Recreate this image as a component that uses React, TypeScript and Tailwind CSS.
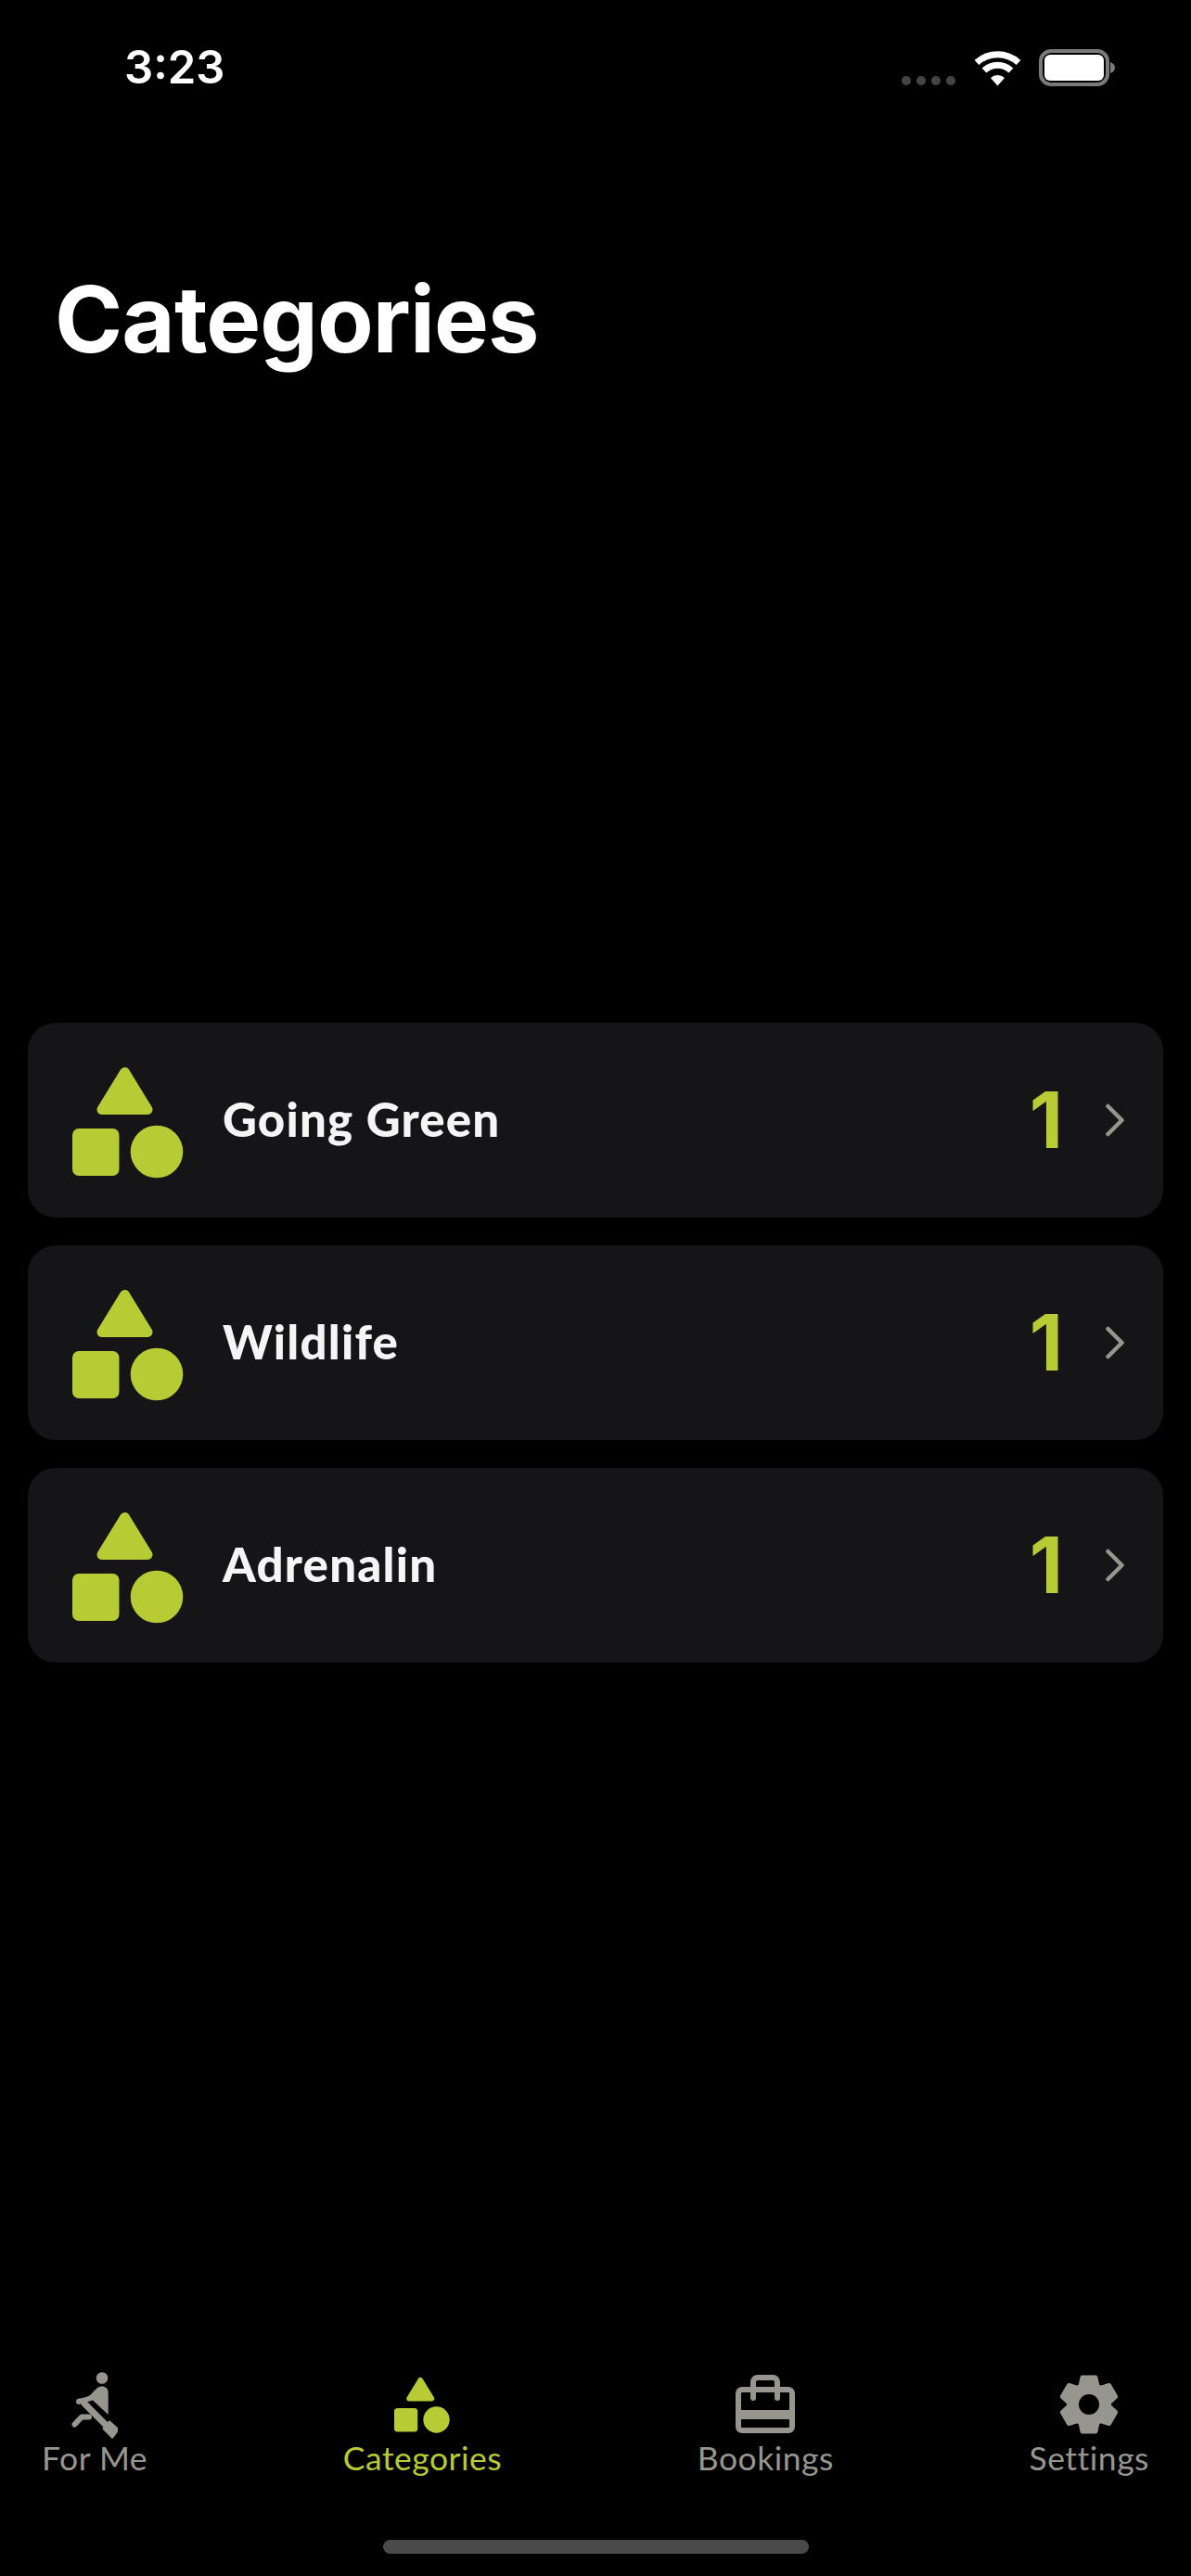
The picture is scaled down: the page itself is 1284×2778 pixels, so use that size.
const lime = '#b7cb35';
const gray = '#96968e';

const ShapesIcon = ({ className }: { className: string }) => (
  <svg viewBox="0 0 120 120" className={className} fill={lime}>
    <polygon points="56.5,5.5 81,45.5 32,45.5" stroke={lime} strokeWidth="11" strokeLinejoin="round" />
    <rect x="0" y="66" width="50.5" height="51" rx="7" />
    <circle cx="91" cy="91" r="28.3" />
  </svg>
);

const PaddlerIcon = () => (
  <svg viewBox="27 19 50 72" className="w-[50px] h-[72px]" fill={gray}>
    <circle cx="60" cy="25.5" r="6.3" />
    <path d="M35 47.5 C42 47 47 45 50 41 L55 36 C59 33 66.7 34 66.7 41 L66.7 65 L50 49.5 L35 54 C31 54 31 48 35 47.5 Z" />
    <path d="M41 53 L65 77" stroke={gray} strokeWidth="7" strokeLinecap="round" />
    <path d="M62 80 L68 73 L77 81 L71 89 Z" stroke={gray} strokeWidth="3" strokeLinejoin="round" />
    <path d="M30.5 75.5 L38 67.5 L46 67.5" stroke={gray} strokeWidth="6" strokeLinecap="round" strokeLinejoin="round" fill="none" />
  </svg>
);

const BriefcaseIcon = () => (
  <svg viewBox="0 0 64 72" className="w-[64px] h-[72px]" fill="none" stroke={gray} strokeWidth="6">
    <rect x="3" y="19" width="58" height="44" rx="4" />
    <path d="M19 28 L19 11 C19 8 21 6 24 6 L40 6 C43 6 45 8 45 11 L45 28" strokeLinecap="round" />
    <path d="M3 46 L61 46" strokeWidth="10" />
  </svg>
);

const GearIcon = () => (
  <svg viewBox="0 0 64 72" className="w-[64px] h-[72px]" fill={gray}>
    {[0, 60, 120, 180, 240, 300].map((deg) => (
      <polygon
        key={deg}
        points="25,6 39,6 42,20 22,20"
        transform={`rotate(${deg} 32 35)`}
        stroke={gray}
        strokeWidth="5"
        strokeLinejoin="round"
      />
    ))}
    <circle cx="32" cy="35" r="24" />
    <circle cx="32" cy="35" r="11" fill="#000" />
  </svg>
);

const categories = ['Going Green', 'Wildlife', 'Adrenalin'];

const tabs = [
  { label: 'For Me', icon: <PaddlerIcon />, active: false },
  { label: 'Categories', icon: <ShapesIcon className="w-[60px] h-[72px]" />, active: true },
  { label: 'Bookings', icon: <BriefcaseIcon />, active: false },
  { label: 'Settings', icon: <GearIcon />, active: false },
];

const App = () => {
  return (
    <div className="w-[1284px] h-[2778px] bg-black flex flex-col font-['Inter',sans-serif]">
      <div className="flex items-start justify-between pt-[45px] pl-[134px] pr-[82px]">
        <span className="text-[49px] leading-[56px] font-semibold text-white">3:23</span>
        <div className="flex items-end gap-[19px] pt-[8px]">
          <div className="flex gap-[6px] pb-[1px] mr-[2px]">
            {[0, 1, 2, 3].map((dot) => (
              <div key={dot} className="w-[10px] h-[10px] rounded-full bg-[#444444]" />
            ))}
          </div>
          <svg viewBox="0 0 50 38" className="w-[50px] h-[38px]">
            <path d="M2 12.5 A33.5 33.5 0 0 1 47 12.5" stroke="#fff" strokeWidth="7" fill="none" />
            <path d="M10 21 A21.5 21.5 0 0 1 39 21" stroke="#fff" strokeWidth="7" fill="none" />
            <path d="M17 29 A11 11 0 0 1 32 29 L24.5 37.5 Z" fill="#fff" />
          </svg>
          <svg viewBox="0 0 82 40" className="w-[82px] h-[40px]">
            <rect x="2" y="2" width="72" height="36" rx="11" fill="none" stroke="#7a7a7a" strokeWidth="4" />
            <rect x="6" y="6" width="64" height="28" rx="6" fill="#fff" />
            <path d="M77 14 C80 15 82 17 82 20 C82 23 80 25 77 26 Z" fill="#7a7a7a" />
          </svg>
        </div>
      </div>

      <h1 className="mt-[193px] pl-[59px] text-[99px] leading-[100px] font-bold text-white tracking-[-0.9px]">Categories</h1>

      <div className="mt-[709px] px-[30px] flex flex-col gap-[30px]">
        {categories.map((name) => (
          <div key={name} className="h-[210px] rounded-[30px] bg-[#151517] flex items-center pl-[48px] pr-[42px]">
            <ShapesIcon className="w-[120px] h-[120px] mt-[5px]" />
            <span className="ml-[42px] -mt-[3px] text-[51px] leading-[60px] font-black tracking-[1.2px] text-[#f5f5f5] font-['Lato',sans-serif]">
              {name}
            </span>
            <span className="ml-auto text-[84px] leading-[90px] font-bold font-['Inter',sans-serif] text-[#b7cb35]">1</span>
            <svg viewBox="0 0 20 36" className="ml-[46px] w-[20px] h-[36px]" fill="none" stroke={gray} strokeWidth="4.5" strokeLinecap="round" strokeLinejoin="round">
              <path d="M2.5 3 L17.5 18 L2.5 33" />
            </svg>
          </div>
        ))}
      </div>

      <div className="mt-auto flex flex-col">
        <div className="flex justify-between px-[45px]">
          {tabs.map((tab) => (
            <div key={tab.label} className="flex flex-col items-center">
              {tab.icon}
              <span className={`text-[35.5px] leading-[42px] tracking-[0.5px] font-normal font-['Lato',sans-serif] ${tab.active ? 'text-[#b7cb35]' : 'text-[#96968e]'}`}>
                {tab.label}
              </span>
            </div>
          ))}
        </div>
        <div className="mt-[67px] mb-[24px] mx-auto w-[459px] h-[15px] rounded-full bg-[#4a4a4a]" />
      </div>
    </div>
  );
};

export default App;
